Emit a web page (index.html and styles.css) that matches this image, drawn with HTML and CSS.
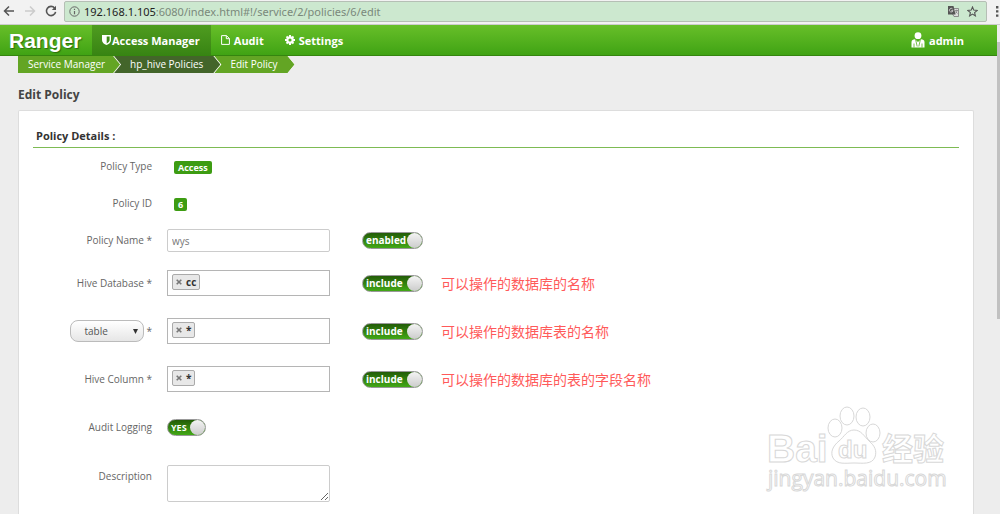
FILE: index.html
```html
<!DOCTYPE html>
<html lang="en">
<head>
  <meta charset="UTF-8">
  <meta name="viewport" content="width=device-width, initial-scale=1.0">
  <title>Ranger</title>
  <link rel="stylesheet" href="styles.css">
</head>
<body>
  <div class="browser-bar">
    <button class="browser-btn" aria-label="Back">
      <svg width="12" height="12" viewBox="0 0 12 12"><path d="M11 6H2M6 1.5L1.5 6L6 10.5" fill="none" stroke="#555" stroke-width="1.5"/></svg>
    </button>
    <button class="browser-btn" aria-label="Forward">
      <svg width="12" height="12" viewBox="0 0 12 12"><path d="M1 6H10M6 1.5L10.5 6L6 10.5" fill="none" stroke="#ccc" stroke-width="1.5"/></svg>
    </button>
    <button class="browser-btn" aria-label="Reload">
      <svg width="12" height="12" viewBox="0 0 12 12"><path d="M9.6 3A4.6 4.6 0 1 0 10.6 6.8" fill="none" stroke="#555" stroke-width="1.6"/><path d="M11 .8V5H6.8Z" fill="#555"/></svg>
    </button>
    <div class="address">
      <svg width="11" height="11" viewBox="0 0 11 11"><circle cx="5.5" cy="5.5" r="4.7" fill="none" stroke="#666"/><path d="M5.5 5V8.2M5.5 2.8V4" stroke="#666" stroke-width="1.2"/></svg>
      <span class="url"><span class="host">192.168.1.105</span>:6080/index.html#!/service/2/policies/6/edit</span>
      <svg class="translate" width="11" height="11" viewBox="0 0 11 11"><path d="M4.5 2.5H10.5V10.5H6L4.5 8" fill="#ddd" stroke="#777" stroke-width=".8"/><path d="M0 0H5.5L7.5 8.5H0Z" fill="#555"/><path d="M4.6 3A1.8 1.8 0 1 0 5 4.6H3.3" fill="none" stroke="#ddd" stroke-width=".8"/><path d="M7 4.5H10M8.5 3.8V4.5M9.4 4.5L7.4 7.5M7.6 5.5L9.5 7.5" fill="none" stroke="#777" stroke-width=".7"/></svg>
      <svg width="11" height="11" viewBox="0 0 11 11"><path d="M5.5 1L6.8 4.1L10.2 4.4L7.6 6.6L8.4 9.9L5.5 8.1L2.6 9.9L3.4 6.6L.8 4.4L4.2 4.1Z" fill="none" stroke="#555" stroke-width="1.1"/></svg>
    </div>
    <button class="browser-btn menu-btn" aria-label="Menu">
      <svg width="3" height="11" viewBox="0 0 3 11"><path d="M0 0H2.4V2.4H0ZM0 4.2H2.4V6.6H0ZM0 8.4H2.4V10.8H0Z" fill="#555"/></svg>
    </button>
  </div>

  <div class="viewport">
    <div class="page">
      <header class="navbar">
        <a class="brand" href="#">Ranger</a>
        <nav class="nav">
          <a class="nav-link active" href="#"><svg width="9" height="10" viewBox="0 0 9 10"><path d="M0 0H9V5C9 7.5 6.8 9.2 4.5 10C2.2 9.2 0 7.5 0 5Z" fill="#fff"/><path d="M4.7 1.4H7.6V5C7.6 6.6 6.2 7.8 4.7 8.4Z" fill="#3c8a16"/></svg>Access Manager</a>
          <a class="nav-link" href="#"><svg class="spaced" width="9" height="10" viewBox="0 0 9 10"><path d="M.6.6H5.5L8.4 3.5V9.4H.6ZM5.3.6V3.7H8.4" fill="none" stroke="#fff" stroke-width="1"/></svg>Audit</a>
          <a class="nav-link" href="#"><svg class="spaced" width="10" height="10" viewBox="0 0 10 10"><circle cx="5" cy="5" r="2.7" fill="none" stroke="#fff" stroke-width="2.2"/><path d="M5 0V2M5 8V10M0 5H2M8 5H10M1.5 1.5L2.9 2.9M7.1 7.1L8.5 8.5M8.5 1.5L7.1 2.9M2.9 7.1L1.5 8.5" stroke="#fff" stroke-width="2"/></svg>Settings</a>
        </nav>
        <a class="user" href="#"><svg width="14" height="16" viewBox="0 0 14 16"><circle cx="7" cy="3.7" r="3.4" fill="#fff"/><path d="M.5 15.5V10C.5 8 2 7.2 4 7.2L7 10L10 7.2C12 7.2 13.5 8 13.5 10V15.5Z" fill="#fff"/><path d="M4.6 7.5L6.2 14.5M9.4 7.5L7.8 14.5M3 11.5V15.5M11 11.5V15.5" stroke="#55ad20" stroke-width=".8"/></svg>admin</a>
      </header>

      <main class="content">
        <ol class="breadcrumb">
          <li class="crumb"><a href="#">Service Manager</a></li>
          <li class="crumb dark"><a href="#">hp_hive Policies</a></li>
          <li class="crumb"><a href="#">Edit Policy</a></li>
        </ol>
        <h1 class="page-title">Edit Policy</h1>

        <form class="card">
          <h2 class="section-title">Policy Details :</h2>

          <div class="row">
            <span class="label">Policy Type</span>
            <div class="control"><span class="badge">Access</span></div>
          </div>
          <div class="row">
            <span class="label">Policy ID</span>
            <div class="control"><span class="badge">6</span></div>
          </div>
          <div class="row">
            <label class="label" for="policy-name">Policy Name *</label>
            <input class="text-input" id="policy-name" type="text" value="wys">
            <label class="toggle"><input type="checkbox" checked><span>enabled</span></label>
          </div>
          <div class="row tall">
            <label class="label" for="hive-database">Hive Database *</label>
            <div class="tag-box">
              <span class="tag"><button type="button" class="tag-remove" aria-label="Remove cc"><svg width="6" height="6" viewBox="0 0 6 6"><path d="M.7.7L5.3 5.3M5.3.7L.7 5.3" stroke="#777" stroke-width="1.6"/></svg></button>cc</span>
              <input class="tag-input" id="hive-database" type="text">
            </div>
            <label class="toggle"><input type="checkbox" checked><span>include</span></label>
            <span class="note">可以操作的数据库的名称</span>
          </div>
          <div class="row tall">
            <div class="label select-label">
              <select class="type-select" aria-label="Resource type"><option>table</option><option>udf</option></select>
              <label for="hive-table">*</label>
            </div>
            <div class="tag-box">
              <span class="tag"><button type="button" class="tag-remove" aria-label="Remove *"><svg width="6" height="6" viewBox="0 0 6 6"><path d="M.7.7L5.3 5.3M5.3.7L.7 5.3" stroke="#777" stroke-width="1.6"/></svg></button>*</span>
              <input class="tag-input" id="hive-table" type="text">
            </div>
            <label class="toggle"><input type="checkbox" checked><span>include</span></label>
            <span class="note">可以操作的数据库表的名称</span>
          </div>
          <div class="row tall">
            <label class="label" for="hive-column">Hive Column *</label>
            <div class="tag-box">
              <span class="tag"><button type="button" class="tag-remove" aria-label="Remove *"><svg width="6" height="6" viewBox="0 0 6 6"><path d="M.7.7L5.3 5.3M5.3.7L.7 5.3" stroke="#777" stroke-width="1.6"/></svg></button>*</span>
              <input class="tag-input" id="hive-column" type="text">
            </div>
            <label class="toggle"><input type="checkbox" checked><span>include</span></label>
            <span class="note">可以操作的数据库的表的字段名称</span>
          </div>
          <div class="row tall">
            <label class="label" for="audit">Audit Logging</label>
            <label class="toggle small"><input id="audit" type="checkbox" checked><span>YES</span></label>
          </div>
          <div class="row top">
            <label class="label" for="description">Description</label>
            <textarea class="text-area" id="description"></textarea>
          </div>
        </form>
      </main>
    </div>
    <div class="scrollbar"></div>
  </div>

  <svg class="watermark" width="184" height="96" viewBox="0 0 184 96">
    <g class="outline">
      <text class="wm-logo" x="2" y="63">Bai</text>
      <ellipse cx="70" cy="29" rx="7" ry="9"/>
      <ellipse cx="82" cy="17" rx="7" ry="9"/>
      <ellipse cx="98" cy="18" rx="7" ry="9"/>
      <ellipse cx="108" cy="34" rx="7" ry="9"/>
      <path d="M89 31C96 31 99 37 104 42C110 47 112 52 110 58C107 66 97 64 89 64C81 64 72 66 68 59C65 53 68 47 74 42C79 38 82 31 89 31Z"/>
      <text class="wm-du" x="73" y="59">du</text>
      <text class="wm-cn" x="117" y="61">经验</text>
      <text class="wm-url" x="3" y="87">jingyan.baidu.com</text>
    </g>
  </svg>
</body>
</html>
```
FILE: styles.css
```css
:root {
  --bg: #ededed;
  --text: #666;
  --green: #3d9c12;
  --crumb: #63a524;
}

* { box-sizing: border-box; }

body {
  margin: 0;
  height: 100vh;
  overflow: hidden;
  position: relative;
  display: flex;
  flex-direction: column;
  background: var(--bg);
  color: var(--text);
  font-family: "Open Sans", "Noto Sans CJK SC", sans-serif;
  font-size: 11px;
}
a { color: inherit; text-decoration: none; }
svg { flex: none; }

/* Browser bar */
.browser-bar {
  display: flex;
  align-items: center;
  height: 25px;
  flex: none;
  padding: 0 0 2px 3px;
  gap: 9px;
  background: #f2f2f2;
  border-bottom: 1px solid #ccc;
}
.browser-btn {
  display: flex;
  padding: 0;
  border: none;
  background: none;
}
.menu-btn { margin-right: 1px; }
.address {
  flex: 1;
  display: flex;
  align-items: center;
  gap: 4px;
  height: 21px;
  margin-left: -2px;
  padding: 0 8px 0 4px;
  border: 1px solid #b5bfb5;
  border-radius: 2px;
  background: #cce8cf;
}
.url {
  flex: 1;
  color: #7a887b;
  font-size: 11px;
  font-family: "Noto Sans", sans-serif;
}
.host { color: #222; }
.translate { margin-right: 4px; }

.viewport {
  flex: 1;
  min-height: 0;
  display: flex;
}
.page {
  flex: 1;
  display: flex;
  flex-direction: column;
}
.scrollbar {
  width: 3px;
  height: 277px;
  margin-top: 17px;
  background: #c1c1c1;
}

/* Navbar */
.navbar {
  display: flex;
  flex: none;
  height: 31px;
  background: linear-gradient(#68bf29, #40a314);
  border-bottom: 1px solid #35850f;
  color: #fff;
  font-size: 11px;
  font-weight: 700;
}
.brand {
  width: 92px;
  padding-left: 9px;
  font: bold 21px/31px "Liberation Sans", sans-serif;
  text-shadow: 1px 1px 1px #2c6d0d;
}
.nav { display: flex; }
.nav-link {
  display: flex;
  align-items: center;
  gap: 1px;
  padding: 0 11px 0 10px;
}
.nav-link.active { background: linear-gradient(#4f9c20, #388413); }
.spaced { margin-right: 3px; }
.user {
  display: flex;
  align-items: center;
  gap: 4px;
  margin-left: auto;
  padding-right: 33px;
}

/* Content */
.content {
  flex: 1;
  min-height: 0;
  display: flex;
  flex-direction: column;
  padding: 0 23px 0 18px;
}
.breadcrumb {
  display: flex;
  flex: none;
  width: max-content;
  margin: 0;
  padding: 0;
  list-style: none;
  background: #fff;
  border-radius: 2px;
  clip-path: polygon(0 0, calc(100% - 7px) 0, 100% 50%, calc(100% - 7px) 100%, 0 100%);
}
.crumb {
  height: 17px;
  padding: 0 17px 0 16px;
  margin-left: -6px;
  background: var(--crumb);
  color: #fff;
  font-size: 10px;
  line-height: 17px;
  clip-path: polygon(0 0, calc(100% - 7px) 0, 100% 50%, calc(100% - 7px) 100%, 0 100%, 7px 50%);
}
.crumb:first-child {
  margin-left: 0;
  padding: 0 15px 0 10px;
  clip-path: polygon(0 0, calc(100% - 7px) 0, 100% 50%, calc(100% - 7px) 100%, 0 100%);
}
.crumb.dark { background: #43652a; }
.page-title {
  margin: 13px 0 6px;
  color: #444;
  font-size: 12px;
  font-weight: 700;
  line-height: 18px;
}
.card {
  flex: 1;
  min-height: 0;
  padding: 15px 14px 0;
  background: #fff;
  border: 1px solid #ddd;
  border-bottom: none;
  border-radius: 2px 2px 0 0;
}
.section-title {
  margin: 0;
  padding: 0 3px 1px;
  border-bottom: 1px solid #7dbb53;
  color: #333;
  font-size: 11px;
  font-weight: 700;
  line-height: 20px;
}

/* Form rows */
.row {
  display: grid;
  grid-template-columns: 119px 163px 61px 1fr;
  column-gap: 15px;
  align-items: center;
  height: 37px;
}
.row.tall { height: 48px; }
.row.top {
  height: auto;
  align-items: start;
  padding-top: 14px;
}
.row.top .label { padding-top: 4px; }
.label {
  text-align: right;
  font-size: 10px;
  line-height: 15px;
}
.control { padding-left: 7px; }
.badge {
  display: inline-block;
  padding: 0 4px;
  border-radius: 2px;
  background: var(--green);
  color: #fff;
  font-size: 9px;
  font-weight: 700;
  line-height: 13px;
}
.text-input, .text-area {
  width: 100%;
  border: 1px solid #ccc;
  border-radius: 2px;
  background: #fff;
  color: #777;
  font: 10px "Open Sans", sans-serif;
}
.text-input { height: 23px; padding: 0 4px; }
.text-area { height: 37px; }
.tag-box {
  display: flex;
  height: 26px;
  padding: 3px 4px;
  border: 1px solid #b5b5b5;
  background: #fff;
}
.tag {
  display: flex;
  align-items: center;
  gap: 4px;
  height: 16px;
  padding: 0 3px;
  border: 1px solid #aaa;
  border-radius: 2px;
  background: #e8e8e8;
  color: #333;
  font-size: 10px;
  font-weight: 700;
}
.tag-remove {
  display: flex;
  padding: 0;
  border: none;
  background: none;
}
.tag-input {
  flex: 1;
  min-width: 0;
  border: none;
  background: none;
}
.select-label {
  display: flex;
  align-items: center;
  justify-content: flex-end;
  gap: 2px;
}
.type-select {
  width: 74px;
  height: 22px;
  padding: 0 10px 0 13px;
  border: 1px solid #bbb;
  border-radius: 8px;
  appearance: none;
  background: url("data:image/svg+xml,%3Csvg xmlns='http://www.w3.org/2000/svg' width='5' height='5'%3E%3Cpath d='M0 0H5L2.5 5Z' fill='%23333'/%3E%3C/svg%3E") no-repeat right 5px center, linear-gradient(#fff, #e6e6e6);
  color: #555;
  font: 10px "Open Sans", sans-serif;
}

/* Toggle switch */
.toggle {
  position: relative;
  justify-self: end;
  display: block;
  width: 61px;
  height: 17px;
  margin-right: -17px;
  padding-left: 3px;
  border: 1px solid #999;
  border-radius: 9px;
  background: linear-gradient(#235c08, #42a816);
  color: #fff;
  font-size: 10px;
  font-weight: 700;
  line-height: 15px;
}
.toggle.small { justify-self: start; width: 39px; margin: 0; font-size: 9px; }
.toggle input {
  position: absolute;
  top: 0;
  right: 0;
  width: 15px;
  height: 15px;
  margin: 0;
  appearance: none;
  border-radius: 50%;
  background: linear-gradient(#f4f4f4, #ccc);
}
.note {
  padding-left: 20px;
  color: #ff5a5a;
  font-family: "Noto Sans CJK SC", sans-serif;
  font-size: 14px;
  font-weight: 400;
  line-height: 20px;
}

/* Watermark over the page */
.watermark {
  position: absolute;
  right: 51px;
  bottom: 19px;
  pointer-events: none;
}
.outline {
  fill: #fff;
  stroke: #d8d8d8;
  stroke-width: 1;
  font-family: "Liberation Sans", sans-serif;
}
.wm-logo { font-size: 39px; font-weight: 700; }
.wm-du { font-size: 24px; font-weight: 700; }
.wm-cn { font: bold 31px "Noto Sans CJK SC", sans-serif; }
.wm-url { font: 21px "Open Sans", sans-serif; }
```
